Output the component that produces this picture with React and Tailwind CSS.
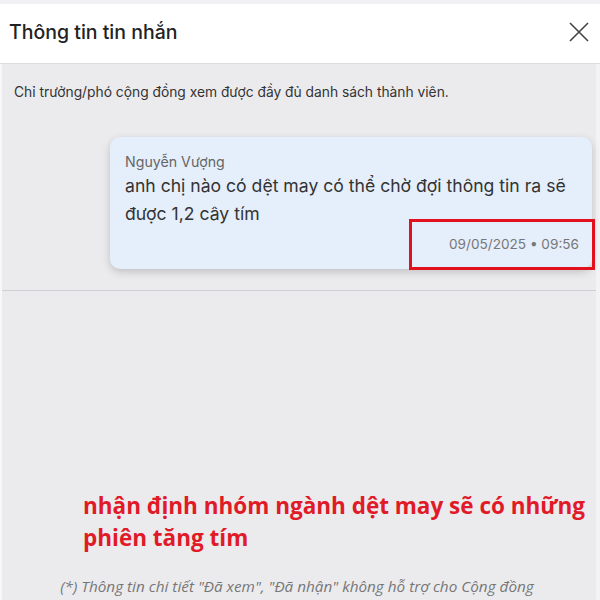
export default function App() {
  return (
    <div className="w-[600px] h-[600px] flex flex-col bg-[#ebebee] overflow-hidden" style={{ fontFamily: "Roboto, 'Noto Sans', sans-serif" }}>
      <div className="h-[4px] bg-[#f1f1f3] shrink-0" />
      <div className="h-[60px] shrink-0 bg-white border-b border-[#dcdce0] flex items-center justify-between pl-[9px] pr-[10px]">
        <div className="text-[19.5px] text-[#222] pb-[1px]" style={{ fontFamily: "Inter, sans-serif", fontWeight: 500 }}>Thông tin tin nhắn</div>
        <svg width="22" height="22" viewBox="0 0 22 22" className="mb-[3px]">
          <path d="M2 2 L20 20 M20 2 L2 20" stroke="#444" strokeWidth="1.6" fill="none" />
        </svg>
      </div>
      <div className="flex-1 flex flex-col border-l-[2px] border-l-[#f7f7f8] border-r-[4px] border-r-[#f3f3f5]">
        <div className="pl-[12px] pt-[18px] text-[13.8px] text-[#333]" style={{ fontFamily: "Inter, sans-serif" }}>Chỉ trưởng/phó cộng đồng xem được đầy đủ danh sách thành viên.</div>
        <div className="flex justify-end pr-[4px] pt-[34px] pb-[21px] border-b border-[#cfcfd3]">
          <div className="relative w-[482px] bg-[#e5eefb] rounded-[10px] shadow-[0_3px_8px_rgba(0,0,0,0.18)] pl-[15px] pr-[10px] pt-[16px] pb-[16px]" style={{ fontFamily: "Inter, sans-serif" }}>
            <div className="text-[14.2px] text-[#666] leading-[18px]">Nguyễn Vượng</div>
            <div className="text-[17.6px] text-[#333] leading-[28px] mt-[1px]">anh chị nào có dệt may có thể chờ đợi thông tin ra sẽ được 1,2 cây tím</div>
            <div className="text-right text-[13.6px] text-[#777] leading-[18px] mt-[7px] pr-[3px]">09/05/2025 • 09:56</div>
            <div className="absolute left-[299px] top-[82px] w-[186px] h-[51px] border-[3px] border-[#e3111e]" />
          </div>
        </div>
        <div className="flex-1" />
        <div className="pl-[81px] text-[22.5px] font-bold text-[#e01a26] leading-[32px] pr-[4px]" style={{ fontFamily: "'Open Sans', sans-serif" }}>
          nhận định nhóm ngành dệt may sẽ có những phiên tăng tím
        </div>
        <div className="text-center italic text-[15.3px] text-[#777] pt-[21px] pb-[2px] pr-[4px] whitespace-nowrap" style={{ fontFamily: "'Open Sans', sans-serif" }}>
          (*) Thông tin chi tiết "Đã xem", "Đã nhận" không hỗ trợ cho Cộng đồng
        </div>
      </div>
    </div>
  );
}
